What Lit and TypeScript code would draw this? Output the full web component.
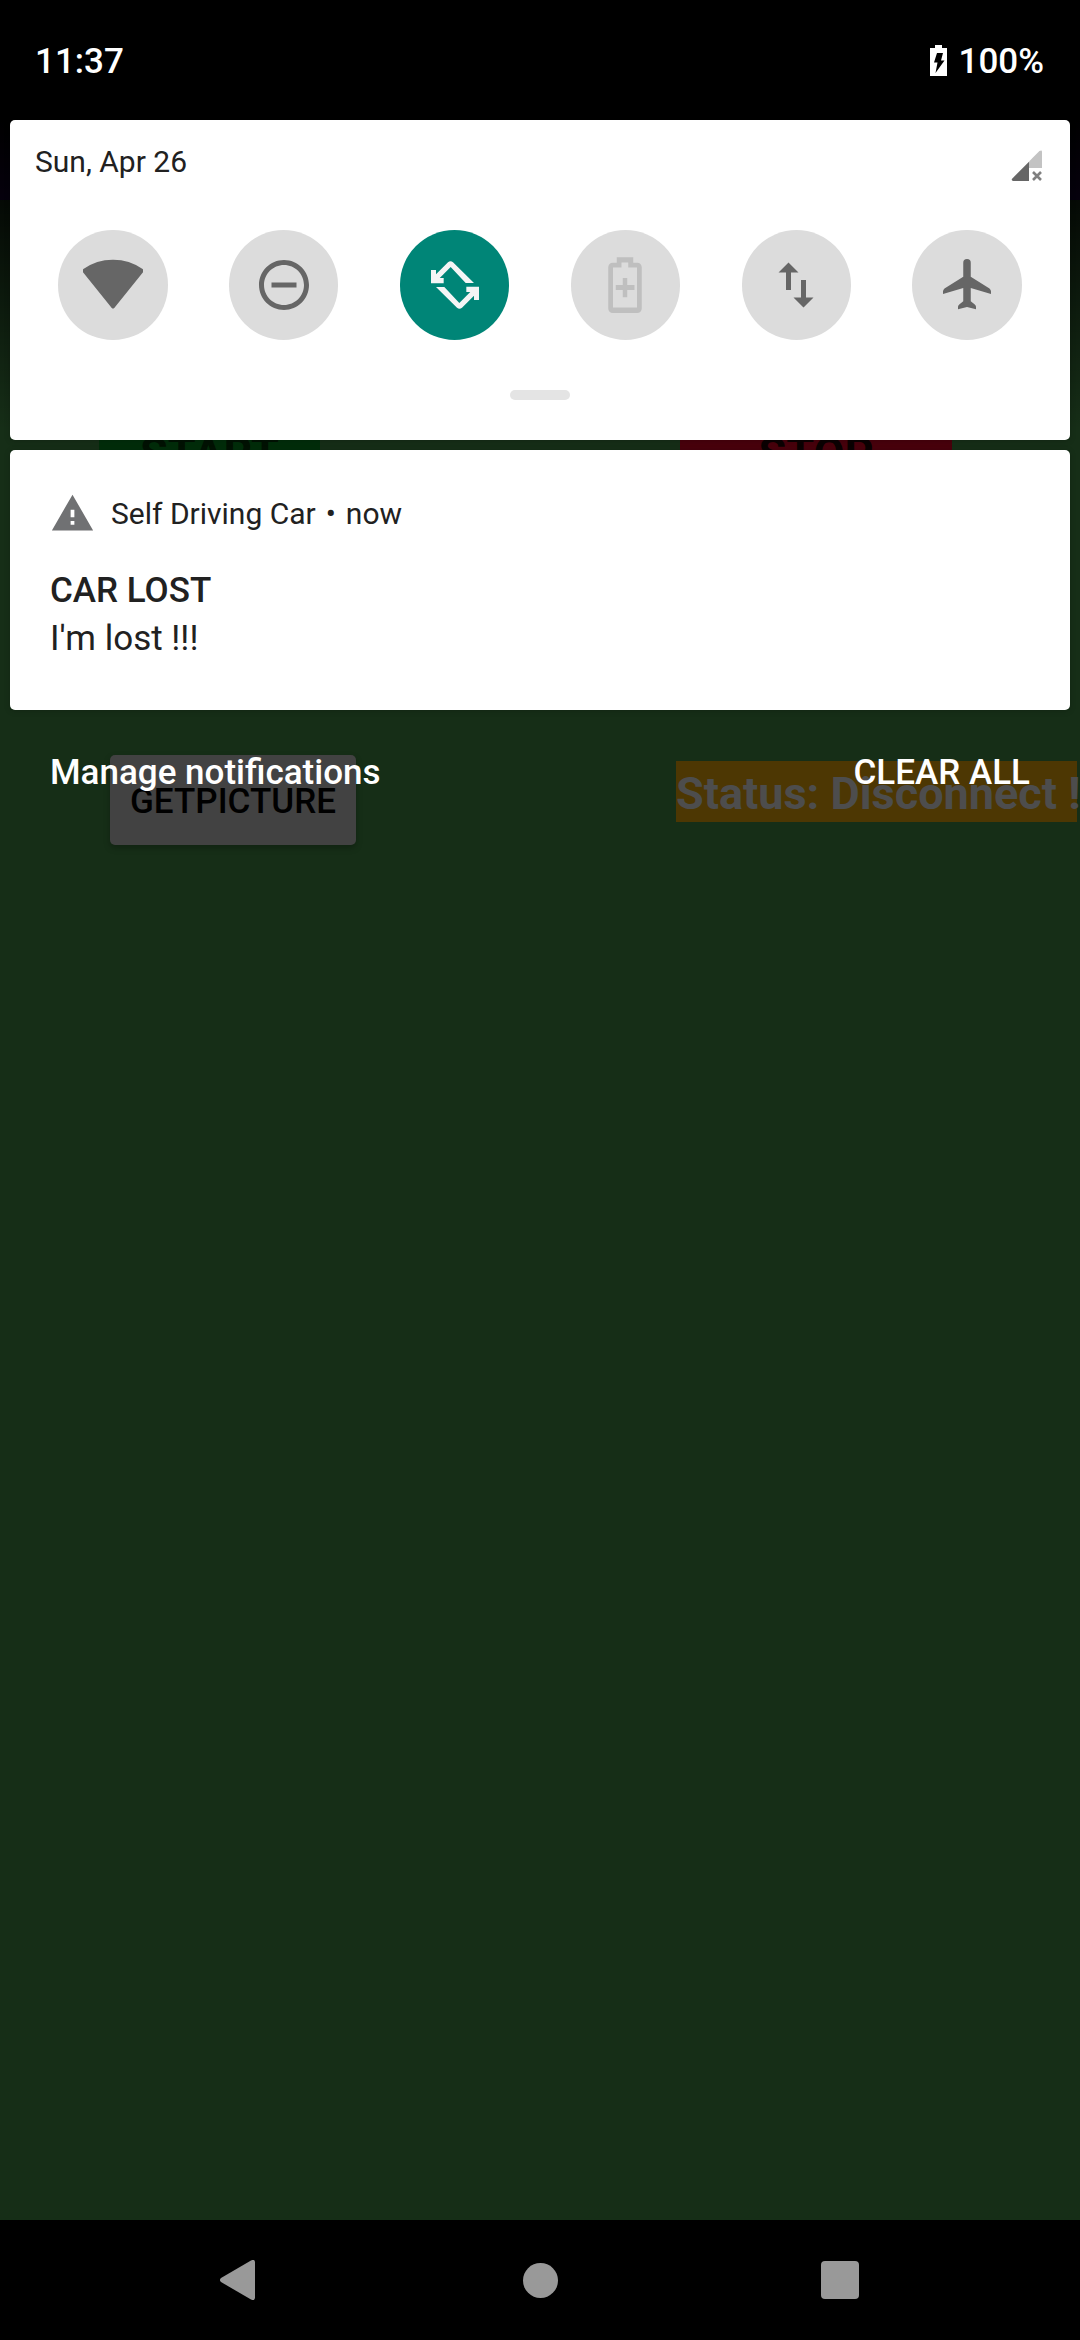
import { LitElement, html, css, svg } from "lit";
import { customElement } from "lit/decorators.js";

interface Tile {
  label: string;
  state: "on" | "off" | "unavailable";
  icon: unknown;
}

const tiles: Tile[] = [
  {
    label: "Wi-Fi",
    state: "off",
    icon: svg`<path d="M12.5 21.2a.75.75 0 0 1-1 0L0 6.900a1 1 0 0 1 .15-1.300A20.500 20.500 0 0 1 12 1.900a20.500 20.500 0 0 1 11.850 3.700 1 1 0 0 1 .15 1.300z"/>`,
  },
  {
    label: "Do Not Disturb",
    state: "off",
    icon: svg`<path d="M7 11v2h10v-2H7zm5-9C6.480 2 2 6.480 2 12s4.480 10 10 10 10-4.480 10-10S17.520 2 12 2zm0 18c-4.410 0-8-3.590-8-8s3.590-8 8-8 8 3.590 8 8-3.590 8-8 8z"/>`,
  },
  {
    label: "Auto-rotate",
    state: "on",
    icon: svg`<path d="M4.400 12.800H7.730L13.730 19.200 18.100 14.800H16.530V12.670H21.600V18H19.600V16.270L14.800 21.070Q13.800 22 12.800 21.070z"/><path d="M19.600 11.200H16.270L10.270 4.800 5.900 9.200H7.470V11.330H2.400V6H4.400V7.730L9.200 2.930Q10.200 2 11.200 2.930z"/>`,
  },
  {
    label: "Battery Saver",
    state: "unavailable",
    icon: svg`<path d="M16.900 3.100h-1.600V.9H8.700v2.200H7.100C6.100 3.100 5.300 3.900 5.300 4.900v16.500c0 1 .8 1.800 1.800 1.800h9.800c1 0 1.800-.8 1.800-1.800V4.900c0-1-.8-1.800-1.800-1.800zm-.1 17.900H7.200V5h3.400V3h2.700v2h3.500zM11.100 9.200h1.800V12h2.900v2h-2.900v2.900h-1.800V14H8.300v-2h2.800z"/>`,
  },
  {
    label: "Mobile data",
    state: "off",
    icon: svg`<path d="M16 17.010V10h-2v7.010h-3L15 21l4-3.990h-3zM9 3L5 6.990h3V14h2V6.990h3L9 3z"/>`,
  },
  {
    label: "Airplane mode",
    state: "off",
    icon: svg`<path d="M10.500 3.100a1.500 1.500 0 0 1 3 0v5.600l7.500 4.700q.6.500.6 1.200v1l-8.100-2.400v5.300l1.500 1.200q.6.500.6 1v1L12 20.800l-3.600.9v-1q0-.5.600-1l1.500-1.200v-5.300l-8.100 2.400v-1q0-.7.600-1.200l7.500-4.700z"/>`,
  },
];

@customElement("car-app")
class CarApp extends LitElement {
  static styles = css`
    :host {
      display: block;
      background: #162e17;
      color: #000;
    }
    .toolbar {
      height: 200px;
      margin-bottom: 206px;
      background: #1a003e;
    }
    .row {
      display: flex;
      align-items: flex-start;
    }
    .drive {
      font-weight: 700;
      font-size: 45px;
      line-height: 53px;
      text-align: center;
      height: 90px;
      padding-top: 21px;
      box-sizing: border-box;
    }
    .start {
      width: 221px;
      margin-left: 99px;
      background: #002d0a;
      color: #001203;
    }
    .stop {
      width: 272px;
      margin-left: 360px;
      background: #49000c;
      color: #0b0002;
    }
    .second {
      margin-top: 259px;
    }
    .picture {
      width: 246px;
      height: 90px;
      margin-left: 110px;
      box-sizing: border-box;
      padding-top: 26px;
      border-radius: 5px;
      background: #424242;
      font-size: 35px;
      line-height: 41px;
      font-weight: 500;
      text-align: center;
      box-shadow: 0 3px 6px rgba(0, 0, 0, 0.25);
    }
    .status {
      width: 401px;
      height: 61px;
      margin: 6px 0 0 320px;
      background: #4d3703;
      color: #4d4d4d;
      font-size: 45px;
      line-height: 65px;
      font-weight: 700;
      white-space: pre;
    }
  `;
  render() {
    return html`
      <div class="toolbar"></div>
      <div class="row">
        <div class="drive start">START</div>
        <div class="drive stop">STOP</div>
      </div>
      <div class="row second">
        <div class="picture">GETPICTURE</div>
        <div class="status">Status: Disconnect !</div>
      </div>
    `;
  }
}

@customElement("quick-settings")
class QuickSettings extends LitElement {
  static styles = css`
    :host {
      display: flex;
      flex-direction: column;
      box-sizing: border-box;
      height: 320px;
      border-radius: 5px;
      background: #fff;
      box-shadow: 0 1px 6px rgba(0, 0, 0, 0.2);
    }
    .date {
      display: flex;
      justify-content: space-between;
      padding: 24px 28px 0 25px;
      height: 36px;
      font-size: 30px;
      line-height: 36px;
      color: #212121;
    }
    .signal {
      width: 36px;
      height: 36px;
      margin-top: 4px;
    }
    .tiles {
      display: flex;
      justify-content: space-between;
      padding: 50px 48px 0;
    }
    .tile {
      display: grid;
      place-items: center;
      width: 109.500px;
      height: 109.500px;
      border-radius: 50%;
      background: #dcdcdc;
      color: #666;
    }
    .tile svg {
      width: 60px;
      height: 60px;
      fill: currentColor;
    }
    .tile.on {
      background: #008577;
      color: #f5f5f5;
    }
    .tile.unavailable {
      color: #bfbfbf;
    }
    .handle {
      width: 60px;
      height: 10px;
      border-radius: 5px;
      background: #e4e4e4;
      margin: 50.500px auto 0;
    }
  `;
  render() {
    return html`
      <div class="date">
        <span>Sun, Apr 26</span>
        <svg class="signal" viewBox="0 0 36 36">
          <path fill="#c3c3c3" d="M23 13.500 33.400 3.100q2.600-1.600 2.600.6V20H23z" />
          <path fill="#666" d="M6.300 30.500 23 13.800V33H7.200Q4.800 32.200 6.300 30.500z" />
          <path fill="none" stroke="#808080" stroke-width="2.600" d="m27 24 8 8m0-8-8 8" />
        </svg>
      </div>
      <div class="tiles">
        ${tiles.map(
          (t) => html`<div class="tile ${t.state}">
            <svg viewBox="0 0 24 24">${t.icon}</svg>
          </div>`
        )}
      </div>
      <div class="handle"></div>
    `;
  }
}

@customElement("notification-card")
class NotificationCard extends LitElement {
  static styles = css`
    :host {
      display: block;
      box-sizing: border-box;
      height: 260px;
      padding: 43px 40px 0;
      border-radius: 5px;
      background: #fff;
      color: #212121;
      box-shadow: 0 1px 6px rgba(0, 0, 0, 0.2);
    }
    .head {
      display: flex;
      align-items: center;
      height: 42px;
      font-size: 30px;
      line-height: 42px;
    }
    .warn {
      width: 45px;
      height: 45px;
      margin: 0 16px 1px 0;
    }
    .dot {
      margin: 0 10px;
    }
    .title,
    .body {
      font-size: 35px;
      line-height: 48px;
    }
    .title {
      font-weight: 500;
      margin-top: 32px;
    }
  `;
  render() {
    return html`
      <div class="head">
        <svg class="warn" viewBox="0 0 24 24" fill="#707173">
          <path d="M1 21h22L12 2 1 21zm12-3h-2v-2h2v2zm0-4h-2v-4h2v4z" />
        </svg>
        <span>Self Driving Car</span><span class="dot">•</span><span>now</span>
      </div>
      <div class="title">CAR LOST</div>
      <div class="body">I'm lost !!!</div>
    `;
  }
}

@customElement("app-root")
class AppRoot extends LitElement {
  static styles = css`
    :host {
      display: grid;
      width: 1080px;
      height: 2340px;
      overflow: hidden;
      font-family: Roboto, sans-serif;
      background: #000;
    }
    .app,
    .shade {
      grid-area: 1 / 1;
      min-width: 0;
    }
    .shade {
      display: flex;
      flex-direction: column;
      background: linear-gradient(#000 120px, rgba(0, 0, 0, 0.8) 200px, rgba(0, 0, 0, 0) 430px);
    }
    .statusbar {
      display: flex;
      align-items: center;
      box-sizing: border-box;
      height: 120px;
      padding: 3px 36px 0 35px;
      color: #fff;
      font-size: 35px;
      font-weight: 500;
    }
    .battery {
      width: 17px;
      height: 31px;
      margin: 0 12px 3px auto;
    }
    .panels {
      flex: 1;
      padding: 0 10px;
      display: flex;
      flex-direction: column;
      gap: 10px;
    }
    .actions {
      display: flex;
      justify-content: space-between;
      padding: 32px 40px 0;
      color: #fff;
      font-size: 35px;
      line-height: 42px;
      font-weight: 500;
    }
    .nav {
      display: flex;
      align-items: center;
      justify-content: space-between;
      box-sizing: border-box;
      height: 120px;
      padding: 0 220px;
      background: #000;
    }
    .nav svg {
      width: 40px;
      height: 40px;
      fill: #999;
    }
  `;
  render() {
    return html`
      <car-app class="app"></car-app>
      <div class="shade">
        <div class="statusbar">
          <span>11:37</span>
          <svg class="battery" viewBox="0 0 17 31">
            <path fill="#fff" d="M5 0h7v3h5v28H0V3h5z" />
            <path fill="#000" d="M7 8h6l-2 7.500h3.500L5.500 28 7.500 17.500H4z" />
          </svg>
          <span>100%</span>
        </div>
        <div class="panels">
          <quick-settings></quick-settings>
          <notification-card></notification-card>
          <div class="actions"><span>Manage notifications</span><span>CLEAR ALL</span></div>
        </div>
        <div class="nav">
          <svg viewBox="0 0 40 40"><path d="M1 18 31 .4q4-1.600 4 2v35.200q0 3.600-4 2L1 22q-2.200-2 0-4z" /></svg>
          <svg viewBox="0 0 40 40"><circle cx="20.500" cy="20.500" r="17.500" /></svg>
          <svg viewBox="0 0 40 40"><rect x="1" y="1" width="38" height="38" rx="4" /></svg>
        </div>
      </div>
    `;
  }
}
